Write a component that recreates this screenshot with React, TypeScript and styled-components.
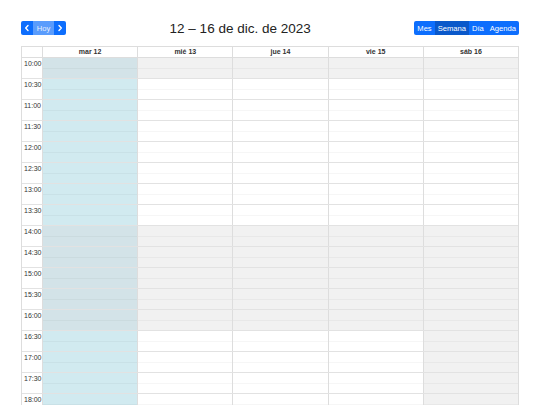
import React from 'react';
import styled, { createGlobalStyle, css } from 'styled-components';

const GlobalStyle = createGlobalStyle`
  html, body {
    margin: 0;
    padding: 0;
    background: #fff;
    font-family: 'Liberation Sans', Arial, sans-serif;
    color: #373a3c;
  }
  * { box-sizing: border-box; }
`;

const days = ['mar 12', 'mié 13', 'jue 14', 'vie 15', 'sáb 16'];

const slots: string[] = [];
for (let h = 10; h <= 18; h++) {
  slots.push(`${h}:00`);
  if (h < 18) slots.push(`${h}:30`);
}

// which slots are outside opening hours
const isClosed = (day: number, slot: number) => {
  if (slot === 0) return true;
  if (slot >= 8 && slot <= 12) return true;
  if (day === 4 && slot >= 13) return true;
  return false;
};

const App = () => {
  return (
    <>
      <GlobalStyle />
      <Page>
        <Toolbar>
          <ButtonGroup>
            <ToolButton $icon aria-label="anterior">
              <Chevron viewBox="0 0 8 8">
                <path d="M5 1.6 L2.7 4 L5 6.4" />
              </Chevron>
            </ToolButton>
            <ToolButton disabled>Hoy</ToolButton>
            <ToolButton $icon aria-label="siguiente">
              <Chevron viewBox="0 0 8 8">
                <path d="M3 1.6 L5.3 4 L3 6.4" />
              </Chevron>
            </ToolButton>
          </ButtonGroup>
          <Title>12 – 16 de dic. de 2023</Title>
          <ButtonGroup>
            <ToolButton>Mes</ToolButton>
            <ToolButton $active>Semana</ToolButton>
            <ToolButton>Día</ToolButton>
            <ToolButton>Agenda</ToolButton>
          </ButtonGroup>
        </Toolbar>

        <Calendar>
          <HeaderRow>
            <GutterHead />
            {days.map((d) => (
              <DayHead key={d}>{d}</DayHead>
            ))}
          </HeaderRow>
          {slots.map((time, s) => (
            <SlotRow key={time}>
              <TimeLabel>{time}</TimeLabel>
              {days.map((d, i) => (
                <Cell key={d} $today={i === 0} $closed={isClosed(i, s)}>
                  <Half />
                  <Half />
                </Cell>
              ))}
            </SlotRow>
          ))}
        </Calendar>
      </Page>
    </>
  );
};

export default App;

const Page = styled.div`
  padding: 21px 21px 0;
`;

const Toolbar = styled.div`
  display: flex;
  align-items: center;
  justify-content: space-between;
  height: 14px;
  margin-bottom: 11px;
`;

const ButtonGroup = styled.div`
  display: flex;
  height: 14px;
  border-radius: 2px;
  overflow: hidden;
`;

const ToolButton = styled.button<{ $active?: boolean; $icon?: boolean }>`
  border: none;
  margin: 0;
  height: 14px;
  padding: 0 3px;
  display: flex;
  align-items: center;
  justify-content: center;
  font-family: 'Liberation Sans', Arial, sans-serif;
  font-size: 7.6px;
  color: #fff;
  background: #0d6efd;
  cursor: pointer;
  ${(p) =>
    p.$active &&
    css`
      background: #0a58ca;
    `}
  ${(p) =>
    p.$icon &&
    css`
      width: 12px;
      padding: 0;
    `}
  &:disabled {
    width: 21px;
    padding: 0;
    background: #5a9cfc;
    color: #e6efff;
  }
`;

const Chevron = styled.svg`
  width: 8px;
  height: 8px;
  fill: none;
  stroke: #fff;
  stroke-width: 1.4;
  stroke-linecap: round;
  stroke-linejoin: round;
`;

const Title = styled.h2`
  margin: 0;
  font-size: 13.5px;
  font-weight: normal;
  color: #222;
`;

const Calendar = styled.div`
  border: 1px solid #ddd;
  border-bottom: none;
`;

const rowColumns = css`
  display: grid;
  grid-template-columns: 20px repeat(5, 1fr);
`;

const HeaderRow = styled.div`
  ${rowColumns};
  height: 11px;
  border-bottom: 1px solid #ddd;
`;

const GutterHead = styled.div``;

const DayHead = styled.div`
  border-left: 1px solid #ddd;
  font-size: 7px;
  font-weight: bold;
  color: #333;
  text-align: center;
  line-height: 10px;
`;

const SlotRow = styled.div`
  ${rowColumns};
  height: 21px;
  border-bottom: 1px solid #e2e2e2;
`;

const TimeLabel = styled.div`
  font-size: 7px;
  color: #333;
  padding: 2px 0 0 2px;
  line-height: 8px;
`;

const Cell = styled.div<{ $today: boolean; $closed: boolean }>`
  display: flex;
  flex-direction: column;
  border-left: 1px solid #ddd;
  background: ${(p) =>
    p.$today ? (p.$closed ? '#d3e3e8' : '#d1eaf0') : p.$closed ? '#f1f1f1' : '#fff'};
`;

const Half = styled.div`
  flex: 1;
  &:first-child {
    border-bottom: 1px solid rgba(0, 0, 0, 0.035);
  }
`;
